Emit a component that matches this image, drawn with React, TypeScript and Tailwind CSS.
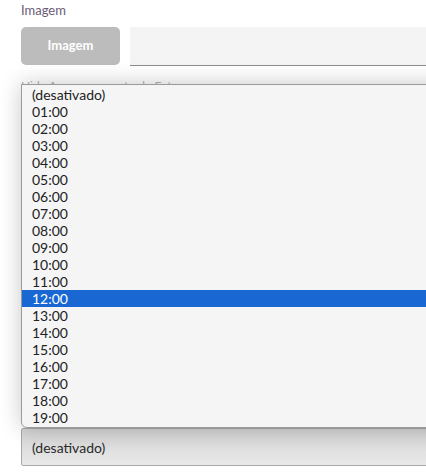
import React from "react";

const hours = [
  "(desativado)",
  ...Array.from({ length: 19 }, (_, i) => `${String(i + 1).padStart(2, "0")}:00`),
];

const App = () => {
  const selected = "12:00";

  return (
    <div
      className="w-[426px] h-[474px] overflow-hidden bg-white relative"
      style={{ fontFamily: "Lato, 'Noto Sans', sans-serif" }}
    >
      <div className="w-[520px] pl-[21px] pt-[2px]">
        <label className="block text-[13px] leading-[17px] text-[#6b5b78]">Imagem</label>
        <div className="flex mt-[8px] h-[39px]">
          <button className="w-[99px] h-[38px] rounded-[5px] bg-[#bcbcbc] text-white text-[13px] font-bold">
            Imagem
          </button>
          <div className="flex-1 ml-[10px] bg-[#f4f4f4] border-b border-[#8f8f8f]" />
        </div>
        <p className="mt-[13px] text-[12px] leading-[14px] text-[#b0b0b0]">
          Hide Armazenamento de Fotos
        </p>
        <div className="h-[335px]" />
        <div className="relative">
          {/* open listbox, drawn above the select */}
          <ul className="absolute bottom-full left-0 right-0 bg-[#f5f5f5] border border-[#9a9a9a] rounded-b-[6px] py-[1px] shadow-[0_0_22px_rgba(0,0,0,0.22)]">
            {hours.map((h) => (
              <li
                key={h}
                className={
                  h === selected
                    ? "h-[17px] leading-[17px] pl-[10px] text-[14px] bg-[#1967d2] text-white"
                    : "h-[17px] leading-[17px] pl-[10px] text-[14px] text-[#222]"
                }
              >
                {h}
              </li>
            ))}
          </ul>
          <div className="h-[38px] flex items-center pl-[10px] border border-[#a8a8a8] rounded-[2px] bg-gradient-to-b from-[#d3d3d3] to-[#e9e9e9] text-[14px] text-[#2a2a2a]">
            (desativado)
          </div>
        </div>
      </div>
    </div>
  );
};

export default App;
